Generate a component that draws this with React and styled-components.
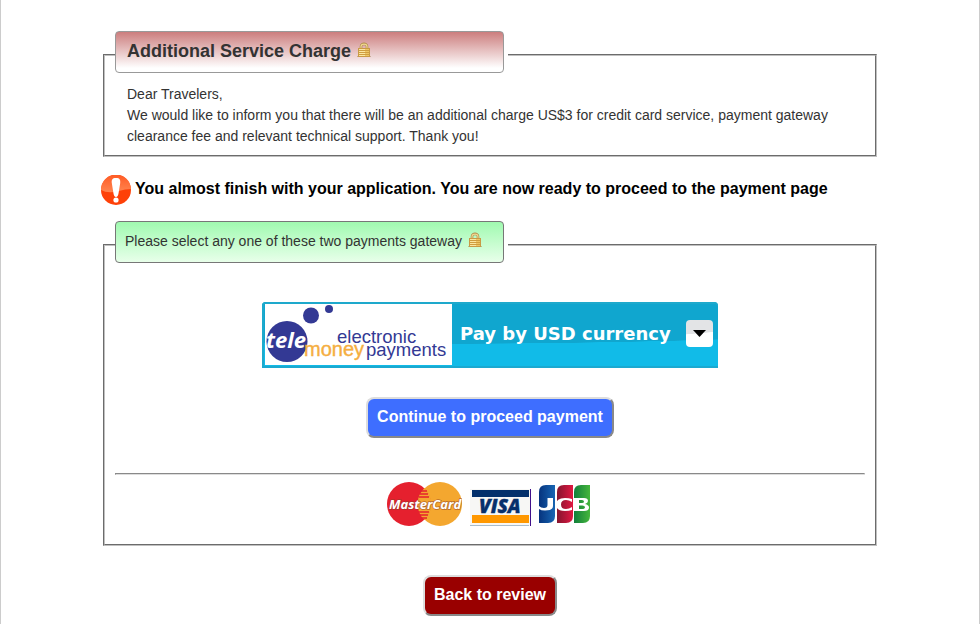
import React from "react";
import styled, { createGlobalStyle } from "styled-components";

const GlobalStyle = createGlobalStyle`
  *, *::before, *::after { box-sizing: border-box; }
  body {
    margin: 0;
    background: #fff;
    color: #333;
    font: 14px/21px "Liberation Sans", Arial, sans-serif;
  }
`;

const Page = styled.main`
  min-height: 100vh;
  padding: 31px 20px 8px;
  border: solid #ccc;
  border-width: 0 1px;
`;

const Content = styled.form`
  display: flex;
  flex-direction: column;
  max-width: 778px;
  margin: 0 auto;
`;

const Group = styled.fieldset`
  min-width: 0;
  margin: 0 2px;
  padding: 0 10px 8px;
  border: 2px groove #c0c0c0;
`;

const Legend = styled.legend`
  width: 393px;
  max-width: 100%;
  padding: 0 4px 6px 0;
`;

const tones = {
  red: "linear-gradient(#cc7e7e, #fff 90%)",
  green: "linear-gradient(#a0fab0, #e8ffea)",
};

const Caption = styled.span`
  display: flex;
  align-items: center;
  gap: 5px;
  height: 42px;
  padding: ${(p) => (p.$large ? "0 11px 2px" : "0 9px 2px")};
  border: 1px solid ${(p) => (p.$large ? "#999" : "#777")};
  border-radius: 4px;
  background: ${(p) => tones[p.$tone]};
  font-size: ${(p) => (p.$large ? "18px" : "14px")};
  font-weight: ${(p) => (p.$large ? "bold" : "normal")};
`;

const Message = styled.p`
  margin: 0;
  padding: 5px 12px 0 12px;
`;

const Notice = styled.p`
  display: flex;
  align-items: center;
  gap: 4px;
  margin: 18px 0 16px;
  color: #000;
  font-size: 16px;
  font-weight: bold;
`;

const NoticeText = styled.span`
  padding-bottom: 4px;
`;

const Gateway = styled.div`
  display: flex;
  flex-direction: column;
  align-items: center;
  padding-top: 33px;
`;

const Picker = styled.label`
  position: relative;
  display: flex;
  width: 456px;
  max-width: 100%;
  height: 66px;
  padding: 2px 0 3px 3px;
  border-radius: 4px 4px 0 0;
  background: radial-gradient(ellipse 640px 38px at 35% 4px, #10a6cf 99%, #11bbe8 100%);
  box-shadow: inset 0 2px #1ea9cc, inset 0 -2px #1ba9d0, inset 2px 0 #1ea9cc;
`;

const CurrencySelect = styled.select`
  flex: 1;
  min-width: 0;
  padding: 0 46px 3px 8px;
  border: 0;
  background: transparent;
  color: #fff;
  font: bold 18px "DejaVu Sans", Verdana, sans-serif;
  appearance: none;
  option { color: #000; }
`;

const Arrow = styled.span`
  position: absolute;
  top: 18px;
  right: 5px;
  display: grid;
  place-items: center;
  width: 27px;
  height: 27px;
  border-radius: 4px;
  background: linear-gradient(175deg, #e3e4e6 48%, #fff 50%);
  pointer-events: none;
`;

const Button = styled.button`
  align-self: center;
  height: 41px;
  margin-top: 29px;
  padding: 0 9px 2px;
  border: 2px outset #ddd;
  border-radius: 8px;
  background: ${(p) => p.$fill};
  color: #fff;
  font: bold 16px "Liberation Sans", Arial, sans-serif;
`;

const Rule = styled.hr`
  width: 100%;
  margin: 35px 0 7px;
  border: 1px inset #ddd;
`;

const Cards = styled.div`
  display: flex;
  align-items: flex-start;
  gap: 8px;
  height: 54px;
  padding-right: 4px;
`;

const Lock = () => (
  <svg width="16" height="18" viewBox="0 0 16 18" aria-hidden="true">
    <path d="M1 14.5h14" stroke="#8a6a3a" strokeOpacity=".4" />
    <path d="M5 7V4.500C5 1 11 1 11 4.500V7" fill="none" stroke="#b08c48" strokeWidth="2.600" />
    <path d="M5 7V4.500C5 1.300 11 1.300 11 4.500V7" fill="none" stroke="#f0d890" strokeWidth="1.200" />
    <rect x="2.500" y="6.500" width="11" height="8" fill="#efc662" stroke="#c99a45" />
    <path d="M3 8.500h10M3 10.500h10M3 12.500h10" stroke="#cf9d40" />
    <path d="M3 7.500h6M3 9.500h6M3 11.500h6M3 13.500h6" stroke="#fbe6a2" />
  </svg>
);

const AlertIcon = () => (
  <svg width="30" height="30" viewBox="0 0 30 30" aria-hidden="true">
    <defs>
      <linearGradient id="alertGloss" x2="0" y2="1"><stop stopColor="#ff5a24" /><stop offset="1" stopColor="#ff8550" /></linearGradient>
    </defs>
    <circle cx="15" cy="15" r="15" fill="#fe4108" />
    <path d="M0 15A15 15 0 0 1 30 14Q24 14 18 16Q7 19 0 15" fill="url(#alertGloss)" />
    <path d="M15 3C11 3 10.500 5 10.800 8L12.400 18Q13 22 15 22T17.600 18L19.200 8C19.500 5 19 3 15 3Z" fill="#fff" />
    <circle cx="15" cy="25" r="2.600" fill="#fff" />
  </svg>
);

const TeleMoney = () => (
  <svg width="187" height="61" viewBox="0 0 187 61" role="img" aria-label="telemoney electronic payments">
    <rect width="187" height="61" fill="#fff" />
    <g fill="#333994">
      <circle cx="22" cy="37.500" r="20.500" />
      <circle cx="46" cy="11.500" r="8" />
      <circle cx="64" cy="5" r="4" />
    </g>
    <g fontFamily="Liberation Sans, Arial, sans-serif">
      <text x="72" y="39" fill="#333994" fontSize="18.500">electronic</text>
      <text x="39" y="52" fill="#f5ae41" stroke="#f5ae41" strokeWidth=".4" fontSize="20">money</text>
      <text x="101" y="52" fill="#333994" fontSize="18.500">payments</text>
    </g>
    <text x="1" y="44" fill="#fff" fontFamily="Open Sans, sans-serif" fontSize="22" fontWeight="bold" fontStyle="italic">tele</text>
  </svg>
);

const MasterCard = () => (
  <svg width="75" height="44" viewBox="0 0 75 44" role="img" aria-label="MasterCard">
    <circle cx="53" cy="22" r="22" fill="#f4a72f" />
    <circle cx="22" cy="22" r="22" fill="#e5202e" />
    <path d="M37.500 6A22 22 0 0 1 37.500 38A22 22 0 0 1 37.500 6" fill="#f4a72f" />
    <path d="M34 9h6M33 12h8M32 15h10M32 30h10M33 33h8M34 36h6" stroke="#e5202e" strokeWidth="1.500" />
    <g fontFamily="Open Sans, sans-serif" fontSize="13" fontWeight="bold" fontStyle="italic">
      <text x="2" y="27" fill="#fff" stroke="#8d3c2a" strokeWidth="1.500" strokeOpacity=".6" paintOrder="stroke">MasterCard</text>
    </g>
  </svg>
);

const Visa = () => (
  <svg width="61" height="44" viewBox="0 0 61 44" role="img" aria-label="Visa">
    <rect y="7" width="60" height="37" fill="#f7f7f5" />
    <path d="M0 43.500h59" stroke="#a9bccb" />
    <rect x="2" y="8" width="57" height="7" fill="#03306b" />
    <rect x="2" y="33" width="57" height="8" fill="#ff9800" />
    <path d="M60.500 7v37" stroke="#40108a" />
    <text x="9" y="31" fill="#07306b" stroke="#07306b" strokeWidth=".4" fontFamily="Open Sans, sans-serif" fontSize="19" fontWeight="800" fontStyle="italic">VISA</text>
  </svg>
);

const Jcb = () => (
  <svg width="51" height="44" viewBox="0 0 51 44" role="img" aria-label="JCB">
    <defs>
      <linearGradient id="jcbBlue"><stop stopColor="#06347e" /><stop offset="1" stopColor="#1765b3" /></linearGradient>
      <linearGradient id="jcbRed"><stop stopColor="#85152e" /><stop offset="1" stopColor="#e01842" /></linearGradient>
      <linearGradient id="jcbGreen"><stop stopColor="#127f3c" /><stop offset="1" stopColor="#45b63c" /></linearGradient>
    </defs>
    <path d="M0 10Q0 3 7 3H16V34Q16 41 9 41H0Z" fill="url(#jcbBlue)" />
    <path d="M18 10Q18 3 25 3H34V34Q34 41 27 41H18Z" fill="url(#jcbRed)" />
    <path d="M35 10Q35 3 42 3H51V34Q51 41 44 41H35Z" fill="url(#jcbGreen)" />
    <path d="M8.500 16H14V24Q14 28.500 6 28.500Q2 28.500 0 27V24Q2 26 5 26Q8.500 26 8.500 23Z" fill="#fff" />
    <path d="M33 17V20Q30 18 27 18Q22 18 22 22.500T27 27Q30 27 33 25V28Q30 29 26 29Q17 29 17 22.500T26 16Q30 16 33 17Z" fill="#fff" />
    <path fillRule="evenodd" d="M35 16H45Q49 16 49 19Q49 21 46 22Q50 23 50 25.500Q50 29 45 29H35ZM40 18V21H43Q45 21 45 19.500T43 18ZM40 23.500V27H43Q46 27 46 25.200T43 23.500Z" fill="#fff" />
  </svg>
);

export default function App() {
  return (
    <>
      <GlobalStyle />
      <Page>
        <Content onSubmit={(e) => e.preventDefault()}>
          <Group>
            <Legend>
              <Caption $large $tone="red">Additional Service Charge <Lock /></Caption>
            </Legend>
            <Message>
              Dear Travelers,<br />
              We would like to inform you that there will be an additional charge US$3 for credit card service, payment gateway clearance fee and relevant technical support. Thank you!
            </Message>
          </Group>
          <Notice>
            <AlertIcon />
            <NoticeText>You almost finish with your application. You are now ready to proceed to the payment page</NoticeText>
          </Notice>
          <Group>
            <Legend>
              <Caption $tone="green">Please select any one of these two payments gateway <Lock /></Caption>
            </Legend>
            <Gateway>
              <Picker>
                <TeleMoney />
                <CurrencySelect aria-label="Payment currency" defaultValue="usd">
                  <option value="usd">Pay by USD currency</option>
                </CurrencySelect>
                <Arrow>
                  <svg width="13" height="7" viewBox="0 0 13 7" aria-hidden="true"><path d="M0 0H13L6.500 7Z" /></svg>
                </Arrow>
              </Picker>
              <Button type="submit" $fill="#3e6eff">Continue to proceed payment</Button>
              <Rule />
              <Cards>
                <MasterCard />
                <Visa />
                <Jcb />
              </Cards>
            </Gateway>
          </Group>
          <Button type="button" $fill="#900">Back to review</Button>
        </Content>
      </Page>
    </>
  );
}
